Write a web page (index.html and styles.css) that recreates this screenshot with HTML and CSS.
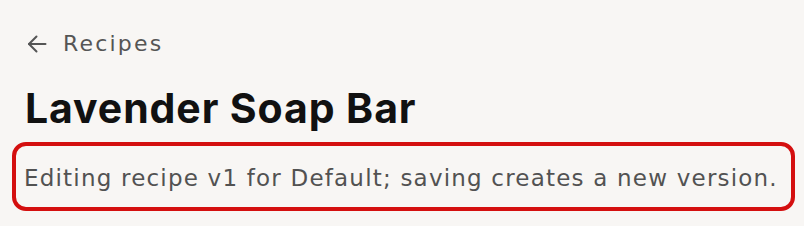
FILE: index.html
```html
<!DOCTYPE html>
<html lang="en">
<head>
  <meta charset="UTF-8">
  <meta name="viewport" content="width=device-width, initial-scale=1.0">
  <title>Lavender Soap Bar</title>
  <link rel="stylesheet" href="styles.css">
</head>
<body>
  <div class="page">
    <a class="back-link" href="#">
      <svg class="back-icon" width="20" height="20" viewBox="0 0 20 20" fill="none" stroke="currentColor" stroke-width="2" stroke-linecap="round" stroke-linejoin="round">
        <path d="M18.5 10H2"/>
        <path d="M9.5 2.5L2 10l7.5 7.5"/>
      </svg>
      <span>Recipes</span>
    </a>
    <h1 class="title">Lavender Soap Bar</h1>
    <div class="notice">
      Editing recipe v1 for Default; saving creates a new version.
    </div>
  </div>
</body>
</html>
```

FILE: styles.css
```css
body {
  margin: 0;
  padding: 0;
  background: #f8f6f4;
  font-family: "DejaVu Sans", sans-serif;
  color: #555;
}

.page {
  padding: 29px 9px 0 12px;
}

.back-link {
  display: flex;
  align-items: center;
  gap: 16px;
  margin-left: 15px;
  color: #555;
  text-decoration: none;
  font-size: 22px;
  letter-spacing: 2.2px;
  line-height: 30px;
  height: 30px;
}

.back-icon {
  display: block;
}

.title {
  margin: 25px 0 0 13px;
  font-family: Inter, sans-serif;
  font-size: 41px;
  font-weight: 700;
  color: #111;
  line-height: 49px;
  letter-spacing: 0.9px;
}

.notice {
  margin-top: 9px;
  border: 4px solid #d40f0f;
  border-radius: 14px;
  padding: 17px 8px 14px 8px;
  font-size: 23px;
  letter-spacing: 1.2px;
  line-height: 30px;
  color: #525252;
  white-space: nowrap;
}
```
